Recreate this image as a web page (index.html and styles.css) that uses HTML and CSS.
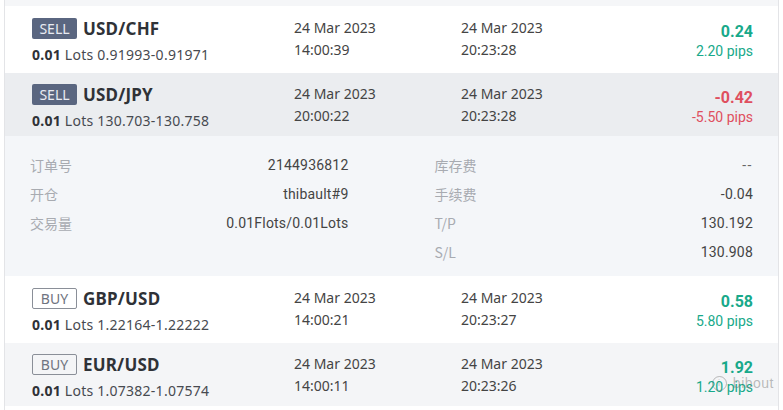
FILE: index.html
```html
<!DOCTYPE html>
<html>
<head>
<meta charset="utf-8">
<link rel="stylesheet" href="styles.css">
</head>
<body>
<div class="frame">
  <div class="strip"></div>

  <div class="row tall white">
    <div class="c-pair">
      <div class="pair-top"><span class="badge sell">SELL</span><span class="pair">USD/CHF</span></div>
      <div class="lots"><b>0.01</b> Lots 0.91993-0.91971</div>
    </div>
    <div class="c-date">24 Mar 2023<br>14:00:39</div>
    <div class="c-date">24 Mar 2023<br>20:23:28</div>
    <div class="c-pl up"><div class="pl">0.24</div><div class="pips">2.20 pips</div></div>
  </div>

  <div class="row short grey">
    <div class="c-pair">
      <div class="pair-top"><span class="badge sell">SELL</span><span class="pair">USD/JPY</span></div>
      <div class="lots"><b>0.01</b> Lots 130.703-130.758</div>
    </div>
    <div class="c-date">24 Mar 2023<br>20:00:22</div>
    <div class="c-date">24 Mar 2023<br>20:23:28</div>
    <div class="c-pl down"><div class="pl">-0.42</div><div class="pips">-5.50 pips</div></div>
  </div>

  <div class="detail">
    <div class="dcol">
      <div class="drow"><span class="dl">订单号</span><span class="dv">2144936812</span></div>
      <div class="drow"><span class="dl">开仓</span><span class="dv">thibault#9</span></div>
      <div class="drow"><span class="dl">交易量</span><span class="dv">0.01Flots/0.01Lots</span></div>
    </div>
    <div class="dcol">
      <div class="drow"><span class="dl">库存费</span><span class="dv dash">--</span></div>
      <div class="drow"><span class="dl">手续费</span><span class="dv">-0.04</span></div>
      <div class="drow"><span class="dl">T/P</span><span class="dv">130.192</span></div>
      <div class="drow"><span class="dl">S/L</span><span class="dv">130.908</span></div>
    </div>
  </div>

  <div class="row tall white">
    <div class="c-pair">
      <div class="pair-top"><span class="badge buy">BUY</span><span class="pair">GBP/USD</span></div>
      <div class="lots"><b>0.01</b> Lots 1.22164-1.22222</div>
    </div>
    <div class="c-date">24 Mar 2023<br>14:00:21</div>
    <div class="c-date">24 Mar 2023<br>20:23:27</div>
    <div class="c-pl up"><div class="pl">0.58</div><div class="pips">5.80 pips</div></div>
  </div>

  <div class="row short light">
    <div class="c-pair">
      <div class="pair-top"><span class="badge buy">BUY</span><span class="pair">EUR/USD</span></div>
      <div class="lots"><b>0.01</b> Lots 1.07382-1.07574</div>
    </div>
    <div class="c-date">24 Mar 2023<br>14:00:11</div>
    <div class="c-date">24 Mar 2023<br>20:23:26</div>
    <div class="c-pl up"><div class="pl">1.92</div><div class="pips">1.20 pips</div></div>
    <span class="mark"><span class="mark-ring">i</span>bibout</span>
  </div>
</div>
</body>
</html>
```

FILE: styles.css
```css
html, body {
  margin: 0;
  padding: 0;
  background: #ffffff;
}
body {
  padding: 0 4px;
  font-family: "Noto Sans", "Noto Sans CJK SC", sans-serif;
  color: #333;
}
.frame {
  border-left: 1px solid #e3e4e7;
  border-right: 1px solid #e3e4e7;
  height: 410px;
  box-sizing: border-box;
}
.strip {
  height: 6px;
  background: #f5f6f8;
}
.row {
  position: relative;
  display: grid;
  grid-template-columns: 262px 167px 1fr auto;
  align-items: start;
  padding: 0 25px 0 27px;
  box-sizing: border-box;
}
.row.tall { height: 67px; padding-top: 11px; }
.row.short { height: 63px; padding-top: 10px; }
.white { background: #ffffff; }
.grey { background: #ebedf0; }
.light { background: #f4f5f7; }

.pair-top {
  display: flex;
  align-items: center;
  height: 22px;
}
.badge {
  display: inline-flex;
  align-items: center;
  justify-content: center;
  box-sizing: border-box;
  height: 21px;
  width: 45px;
  font-size: 14px;
  border-radius: 2px;
  margin-right: 6px;
}
.badge.sell {
  background: #5a6680;
  color: #e8ebf2;
}
.badge.buy {
  border: 1px solid #8a8f98;
  color: #6f7480;
  background: transparent;
}
.pair {
  font-size: 17px;
  font-weight: 700;
  color: #2f3237;
  letter-spacing: 0.2px;
}
.lots {
  margin-top: 6px;
  font-size: 14px;
  line-height: 20px;
  color: #474a50;
  letter-spacing: 0.25px;
}
.lots b { color: #2f3237; }
.c-date {
  font-size: 14px;
  line-height: 22px;
  color: #444;
}
.c-pl {
  text-align: right;
  font-family: Roboto, "Noto Sans", sans-serif;
  padding-top: 5px;
}
.pl {
  font-size: 16px;
  font-weight: 700;
  line-height: 20px;
}
.pips {
  font-size: 14px;
  line-height: 18px;
}
.up { color: #18a98a; }
.down { color: #df4f5e; }

.detail {
  height: 140px;
  box-sizing: border-box;
  background: #f4f6f9;
  padding: 15px 25px 0 25px;
  display: grid;
  grid-template-columns: 1fr 1fr;
  column-gap: 86px;
  font-size: 14px;
}
.drow {
  display: flex;
  justify-content: space-between;
  line-height: 29px;
}
.dl {
  color: #a8abb1;
  font-family: "Noto Sans CJK SC", "Noto Sans", sans-serif;
  font-size: 14px;
}
.dv {
  color: #444;
  font-family: Roboto, "Noto Sans", sans-serif;
  letter-spacing: 0.2px;
}
.dv.dash {
  letter-spacing: 1.5px;
  color: #666;
}
.mark {
  position: absolute;
  right: 4px;
  top: 32px;
  font-family: "Liberation Sans", sans-serif;
  font-size: 14px;
  color: rgba(110, 110, 110, 0.45);
  letter-spacing: 0.5px;
  display: flex;
  align-items: center;
  gap: 6px;
}
.mark-ring {
  display: inline-flex;
  align-items: center;
  justify-content: center;
  width: 13px;
  height: 13px;
  border: 1px solid rgba(110, 110, 110, 0.45);
  border-radius: 50%;
  font-size: 9px;
}
```
